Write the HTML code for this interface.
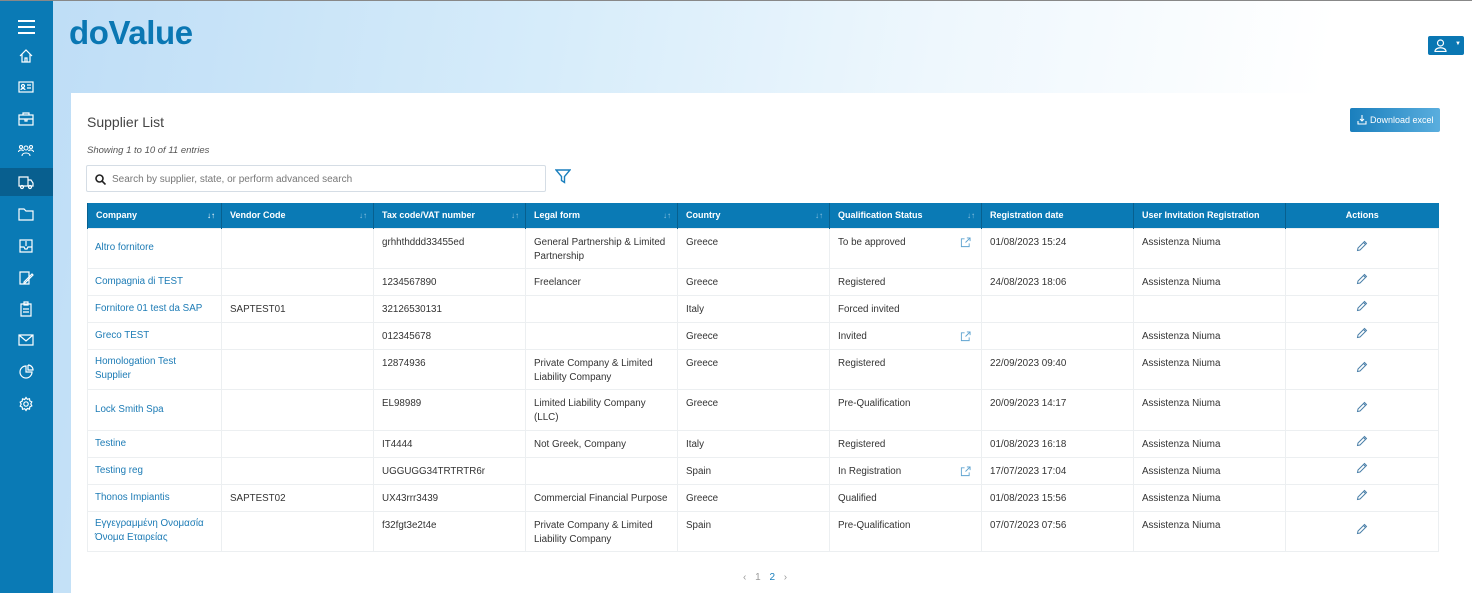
<!DOCTYPE html>
<html><head><meta charset="utf-8"><style>
*{box-sizing:border-box;margin:0;padding:0}
body{width:1472px;height:593px;overflow:hidden;font-family:"Liberation Sans",sans-serif;background:linear-gradient(100deg,#bcdcf6 0%,#d6ecfa 35%,#eef7fd 60%,#fff 85%);position:relative;color:#333}
.topline{position:absolute;left:0;top:0;width:1472px;height:1px;background:#888}
.side{position:absolute;left:0;top:1px;width:53px;height:592px;background:#0a7ab5}
.side .act{position:absolute;left:0;top:167px;width:53px;height:28px;background:#085f8f}
.ic{position:absolute;left:18px;width:16px;height:16px}
.logo{position:absolute;left:69px;top:14px;font-size:33px;font-weight:bold;color:#0a77b3;letter-spacing:-0.4px}
.user{position:absolute;left:1428px;top:36px;width:36px;height:19px;background:#0a77b3;border-radius:2px}
.card{position:absolute;left:71px;top:93px;width:1401px;height:500px;background:#fff}
h1{position:absolute;left:87px;top:114px;font-size:14px;font-weight:normal;color:#444}
.show{position:absolute;left:87px;top:145px;font-size:9.5px;font-style:italic;color:#555}
.search{position:absolute;left:86px;top:165px;width:460px;height:27px;border:1px solid #d5dde5;border-radius:2px;font-size:10px;color:#777;padding:8px 0 0 25px}
.dl{position:absolute;left:1350px;top:108px;width:90px;height:24px;background:linear-gradient(90deg,#1a7fbd,#5aaede);border-radius:2px;color:#fff;font-size:9px;padding:7px 0 0 20px}
table{position:absolute;left:87px;top:203px;border-collapse:collapse;table-layout:fixed;width:1351px;font-size:9.8px}
th{background:#0a7ab5;color:#fff;text-align:left;height:25px;padding:0 8px;font-weight:bold;border-left:1px solid #07608f;font-size:9px;position:relative}
th .s{position:absolute;right:6px;top:8px;color:#8fc3e0;font-weight:normal;font-size:8px}
td{border:1px solid #eceff1;padding:7px 8px 0 8px;vertical-align:top;line-height:14px;color:#333;white-space:nowrap;overflow:hidden}
td.c{color:#1c7bb5;vertical-align:middle;padding:0 4px 0 7px}
td.a{text-align:center;vertical-align:middle;padding-top:0}
.ext{float:right;margin-top:1px;margin-right:2px}
.pg{position:absolute;left:743px;top:572px;font-size:10px;color:#999;letter-spacing:3px}
</style></head><body>
<div class="topline"></div>
<div class="side"><div class="act"></div>
<svg class="ic" style="top:18px;left:17px;width:19px" viewBox="0 0 19 16"><path d="M1 2h17M1 8h17M1 14h17" stroke="#fff" stroke-width="2"/></svg>
<svg class="ic" style="top:47px" viewBox="0 0 16 16" fill="none" stroke="#fff" stroke-width="1.2"><path d="M2 8L8 2l6 6M4 6v8h8V6M7 14v-4h2v4"/></svg>
<svg class="ic" style="top:78px" viewBox="0 0 16 16" fill="none" stroke="#fff" stroke-width="1.2"><rect x="1" y="3" width="14" height="10"/><circle cx="5" cy="7" r="1.5"/><path d="M3 11c0-2 4-2 4 0M9 6h4M9 9h4"/></svg>
<svg class="ic" style="top:110px" viewBox="0 0 16 16" fill="none" stroke="#fff" stroke-width="1.2"><rect x="1" y="4" width="14" height="10"/><path d="M5 4V2h6v2M1 8h14M7 8v2h2V8"/></svg>
<svg class="ic" style="top:142px" viewBox="0 0 16 16" fill="none" stroke="#fff" stroke-width="1.1"><circle cx="8" cy="5" r="2"/><circle cx="3" cy="4" r="1.5"/><circle cx="13" cy="4" r="1.5"/><path d="M4 13c0-4 8-4 8 0M0.5 9c0-2 4-3 5-1M15.5 9c0-2-4-3-5-1"/></svg>
<svg class="ic" style="top:173px" viewBox="0 0 16 16" fill="none" stroke="#fff" stroke-width="1.2"><path d="M1 3h9v9H1zM10 6h3l2 3v3h-5"/><circle cx="4" cy="13" r="1.5"/><circle cx="12" cy="13" r="1.5"/></svg>
<svg class="ic" style="top:205px" viewBox="0 0 16 16" fill="none" stroke="#fff" stroke-width="1.2"><path d="M1 3h5l2 2h7v9H1z"/></svg>
<svg class="ic" style="top:237px" viewBox="0 0 16 16" fill="none" stroke="#fff" stroke-width="1.2"><path d="M2 2h12v12H2zM2 9h4l1 2h2l1-2h4M8 3v5"/></svg>
<svg class="ic" style="top:269px" viewBox="0 0 16 16" fill="none" stroke="#fff" stroke-width="1.2"><path d="M2 2h9v12H2zM6 12l8-8 1 1-8 8H6z"/></svg>
<svg class="ic" style="top:300px" viewBox="0 0 16 16" fill="none" stroke="#fff" stroke-width="1.2"><path d="M3 3h10v12H3zM6 1h4v3H6zM5 8h6M5 11h6"/></svg>
<svg class="ic" style="top:331px" viewBox="0 0 16 16" fill="none" stroke="#fff" stroke-width="1.2"><path d="M1 3h14v10H1zM1 3l7 6 7-6"/></svg>
<svg class="ic" style="top:363px" viewBox="0 0 16 16" fill="none" stroke="#fff" stroke-width="1.2"><path d="M8 2a6 6 0 1 0 6 6H8zM10 1v5h5a5 5 0 0 0-5-5"/></svg>
<svg class="ic" style="top:395px" viewBox="0 0 16 16" fill="none" stroke="#fff" stroke-width="1.2"><circle cx="8" cy="8" r="2.2"/><path d="M8 1.5l1.3 1.8 2.2-.6.3 2.2 2 1-1 2 1 2-2 1-.3 2.2-2.2-.6L8 14.5l-1.3-1.8-2.2.6-.3-2.2-2-1 1-2-1-2 2-1 .3-2.2 2.2.6z"/></svg>
</div>
<div class="logo">doValue</div>
<div class="user"><svg style="position:absolute;left:6px;top:3px" width="13" height="13" viewBox="0 0 13 13" fill="none" stroke="#fff" stroke-width="1.2"><circle cx="6.5" cy="4" r="3"/><path d="M1 12.5c0-5 11-5 11 0z"/></svg><span style="position:absolute;left:27px;top:5px;color:#fff;font-size:6px">▼</span></div>
<div class="card"></div>
<h1>Supplier List</h1>
<div class="show">Showing 1 to 10 of 11 entries</div>
<div class="search"><svg style="position:absolute;left:8px;top:8px" width="11" height="11" viewBox="0 0 11 11" fill="none" stroke="#222" stroke-width="1.6"><circle cx="4.5" cy="4.5" r="3.5"/><path d="M7 7l3.5 3.5"/></svg>Search by supplier, state, or perform advanced search</div>
<svg style="position:absolute;left:555px;top:169px" width="16" height="15" viewBox="0 0 16 15" fill="none" stroke="#1a7fbd" stroke-width="1.4"><path d="M1 1h14L9.5 7.5v6l-3-2v-4z"/></svg>
<div class="dl"><svg style="position:absolute;left:7px;top:7px" width="10" height="10" viewBox="0 0 10 10" fill="none" stroke="#fff" stroke-width="1.1"><path d="M5 0v6M3 4l2 2 2-2M1 6v3h8V6"/></svg>Download excel</div>
<svg width="0" height="0" style="position:absolute"><defs>
<symbol id="pen" viewBox="0 0 12 12"><path d="M1.5 10.5l.5-2.5 6.5-6.5 2 2-6.5 6.5zM7.5 2.5l2 2" fill="none" stroke="#4a7fa8" stroke-width="1"/></symbol>
<symbol id="ext" viewBox="0 0 12 12"><path d="M5 2H1.5v8.5H10V7M6 6l5-5M7.5 1H11v3.5" fill="none" stroke="#5fa3d0" stroke-width="1"/></symbol>
</defs></svg>
<table>
<colgroup><col style="width:134px"><col style="width:152px"><col style="width:152px"><col style="width:152px"><col style="width:152px"><col style="width:152px"><col style="width:152px"><col style="width:152px"><col style="width:153px"></colgroup>
<tr><th>Company<span class="s" style="color:#fff">↓↑</span></th><th>Vendor Code<span class="s">↓↑</span></th><th>Tax code/VAT number<span class="s">↓↑</span></th><th>Legal form<span class="s">↓↑</span></th><th>Country<span class="s">↓↑</span></th><th>Qualification Status<span class="s">↓↑</span></th><th>Registration date</th><th>User Invitation Registration</th><th style="text-align:center">Actions</th></tr>
<tr style="height:40px"><td class="c">Altro fornitore</td><td></td><td>grhhthddd33455ed</td><td>General Partnership &amp; Limited<br>Partnership</td><td>Greece</td><td>To be approved<svg class="ext" width="11" height="11"><use href="#ext"/></svg></td><td>01/08/2023 15:24</td><td>Assistenza Niuma</td><td class="a"><svg width="12" height="12"><use href="#pen"/></svg></td></tr>
<tr style="height:27px"><td class="c">Compagnia di TEST</td><td></td><td>1234567890</td><td>Freelancer</td><td>Greece</td><td>Registered</td><td>24/08/2023 18:06</td><td>Assistenza Niuma</td><td class="a"><svg width="12" height="12"><use href="#pen"/></svg></td></tr>
<tr style="height:27px"><td class="c">Fornitore 01 test da SAP</td><td>SAPTEST01</td><td>32126530131</td><td></td><td>Italy</td><td>Forced invited</td><td></td><td></td><td class="a"><svg width="12" height="12"><use href="#pen"/></svg></td></tr>
<tr style="height:27px"><td class="c">Greco TEST</td><td></td><td>012345678</td><td></td><td>Greece</td><td>Invited<svg class="ext" width="11" height="11"><use href="#ext"/></svg></td><td></td><td>Assistenza Niuma</td><td class="a"><svg width="12" height="12"><use href="#pen"/></svg></td></tr>
<tr style="height:40px"><td class="c">Homologation Test<br>Supplier</td><td></td><td>12874936</td><td>Private Company &amp; Limited<br>Liability Company</td><td>Greece</td><td>Registered</td><td>22/09/2023 09:40</td><td>Assistenza Niuma</td><td class="a"><svg width="12" height="12"><use href="#pen"/></svg></td></tr>
<tr style="height:41px"><td class="c">Lock Smith Spa</td><td></td><td>EL98989</td><td>Limited Liability Company<br>(LLC)</td><td>Greece</td><td>Pre-Qualification</td><td>20/09/2023 14:17</td><td>Assistenza Niuma</td><td class="a"><svg width="12" height="12"><use href="#pen"/></svg></td></tr>
<tr style="height:27px"><td class="c">Testine</td><td></td><td>IT4444</td><td>Not Greek, Company</td><td>Italy</td><td>Registered</td><td>01/08/2023 16:18</td><td>Assistenza Niuma</td><td class="a"><svg width="12" height="12"><use href="#pen"/></svg></td></tr>
<tr style="height:27px"><td class="c">Testing reg</td><td></td><td>UGGUGG34TRTRTR6r</td><td></td><td>Spain</td><td>In Registration<svg class="ext" width="11" height="11"><use href="#ext"/></svg></td><td>17/07/2023 17:04</td><td>Assistenza Niuma</td><td class="a"><svg width="12" height="12"><use href="#pen"/></svg></td></tr>
<tr style="height:27px"><td class="c">Thonos Impiantis</td><td>SAPTEST02</td><td>UX43rrr3439</td><td>Commercial Financial Purpose</td><td>Greece</td><td>Qualified</td><td>01/08/2023 15:56</td><td>Assistenza Niuma</td><td class="a"><svg width="12" height="12"><use href="#pen"/></svg></td></tr>
<tr style="height:40px"><td class="c">Εγγεγραμμένη Ονομασία<br>Όνομα Εταιρείας</td><td></td><td>f32fgt3e2t4e</td><td>Private Company &amp; Limited<br>Liability Company</td><td>Spain</td><td>Pre-Qualification</td><td>07/07/2023 07:56</td><td>Assistenza Niuma</td><td class="a"><svg width="12" height="12"><use href="#pen"/></svg></td></tr>
</table>
<div class="pg">‹ 1 <span style="color:#1a7fbd">2</span> ›</div>
</body></html>
